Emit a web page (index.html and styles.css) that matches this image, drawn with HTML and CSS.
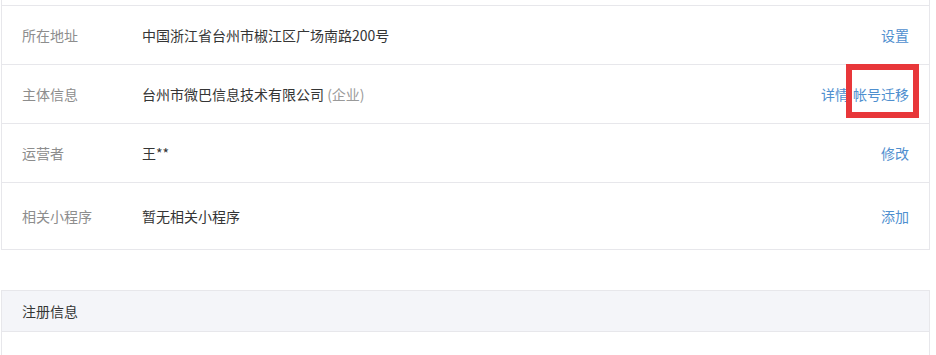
FILE: index.html
```html
<!DOCTYPE html>
<html>
<head>
    <meta charset="utf-8">
    <title>帐号信息</title>
    <link rel="stylesheet" href="styles.css">
</head>
<body>
<div class='page'>
    <div class='panel panel_info'>
        <div class='row row_first'>
            <div class='label'>所在地址</div>
            <div class='value'>中国浙江省台州市椒江区广场南路200号</div>
            <div class='actions'><a href='#'>设置</a></div>
        </div>
        <div class='row'>
            <div class='label'>主体信息</div>
            <div class='value'>台州市微巴信息技术有限公司 <span class='tips'>(企业)</span></div>
            <div class='actions'>
                <a href='#'>详情</a>
                <a href='#' class='marked'>帐号迁移</a>
            </div>
        </div>
        <div class='row'>
            <div class='label'>运营者</div>
            <div class='value'>王**</div>
            <div class='actions'><a href='#'>修改</a></div>
        </div>
        <div class='row row_last'>
            <div class='label'>相关小程序</div>
            <div class='value'>暂无相关小程序</div>
            <div class='actions'><a href='#'>添加</a></div>
        </div>
    </div>

    <div class='panel panel_reg'>
        <div class='panel_hd'>注册信息</div>
        <div class='panel_bd'></div>
    </div>
</div>
</body>
</html>
```

FILE: styles.css
```css
html, body
{
    margin:0;
    padding:0;
    background-color:#ffffff;
    overflow:hidden;
}

body
{
    font-family:"Noto Sans CJK SC", "Liberation Sans", sans-serif;
    font-size:14px;
    color:#353535;
}

.page
{
    width:929px;
    margin-left:1px;
}

.panel
{
    border:1px solid #e7e7eb;
    background-color:#ffffff;
}

.panel_info
{
    padding-top:5px;
    border-top:none;
}

.row
{
    display:flex;
    align-items:center;
    height:58px;
    padding:0 20px;
    border-bottom:1px solid #e7e7eb;
}

.row_first
{
    border-top:1px solid #e7e7eb;
}

.row_last
{
    height:65px;
    padding-bottom:1px;
    border-bottom:none;
}

.label
{
    width:120px;
    flex-shrink:0;
    color:#8d8d8d;
}

.value
{
    flex:1;
}

.tips
{
    color:#9a9a9a;
}

.actions
{
    display:flex;
    gap:4px;
}

.actions a
{
    color:#4f8fcf;
    text-decoration:none;
}

.marked
{
    position:relative;
}

.marked::after
{
    content:'';
    position:absolute;
    left:-7px;
    right:-10px;
    top:-20px;
    bottom:-14px;
    border:6px solid #e8373a;
}

.panel_reg
{
    margin-top:40px;
    border-bottom:none;
}

.panel_hd
{
    height:40px;
    line-height:40px;
    padding:0 20px;
    background-color:#f4f5f9;
    border-bottom:1px solid #e7e7eb;
}

.panel_bd
{
    height:60px;
}
```
